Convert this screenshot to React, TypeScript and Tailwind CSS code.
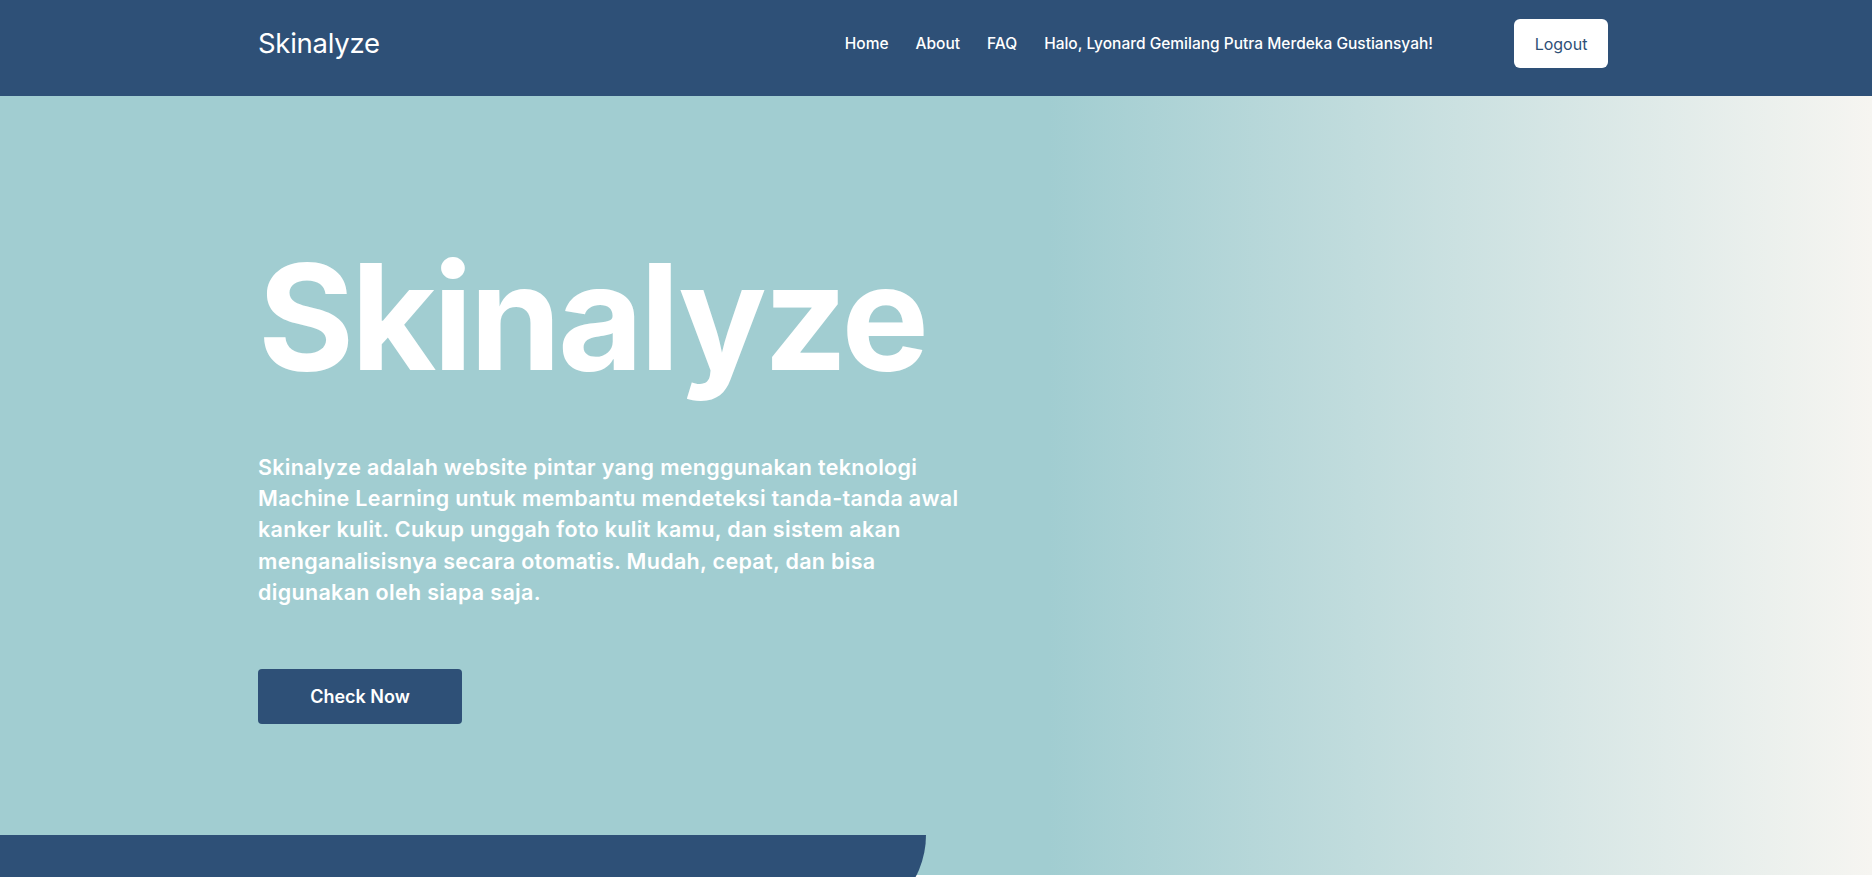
import React from "react";

export default function App() {
  return (
    <div
      className="relative h-[877px] w-full overflow-hidden bg-white"
      style={{ fontFamily: "Inter, 'Liberation Sans', sans-serif" }}
    >
      <header className="flex h-[96px] items-start bg-[#2e5077] pl-[258px] pr-[264px] pt-[19px]">
        <div className="flex h-[49px] w-full items-center">
          <a className="text-[27.5px] font-normal leading-none tracking-[-0.01em] text-white">Skinalyze</a>
          <nav className="ml-auto flex items-center gap-[27px] text-[15.5px] font-medium text-white">
            <a>Home</a>
            <a>About</a>
            <a>FAQ</a>
            <span>Halo, Lyonard Gemilang Putra Merdeka Gustiansyah!</span>
          </nav>
          <button className="ml-[81px] flex h-[49px] w-[94px] items-center justify-center rounded-[6px] bg-white text-[16px] font-normal text-[#2e5077]">
            Logout
          </button>
        </div>
      </header>

      <section className="relative h-[779px] bg-[linear-gradient(90deg,#a1cdd1_0%,#a1cdd1_56%,#f6f5f1_100%)] pl-[258px] pt-[147px]">
        <h1 className="text-[147px] font-bold leading-none tracking-[-0.022em] text-white">Skinalyze</h1>
        <p className="mt-[62px] whitespace-nowrap text-[21.5px] font-semibold leading-[31.2px] tracking-[0.015em] text-white">
          Skinalyze adalah website pintar yang menggunakan teknologi
          <br />
          Machine Learning untuk membantu mendeteksi tanda-tanda awal
          <br />
          kanker kulit. Cukup unggah foto kulit kamu, dan sistem akan
          <br />
          menganalisisnya secara otomatis. Mudah, cepat, dan bisa
          <br />
          digunakan oleh siapa saja.
        </p>
        <button className="mt-[61px] flex h-[55px] w-[204px] items-center justify-center rounded-[4px] bg-[#2e5077] text-[18px] font-semibold text-white">
          Check Now
        </button>
        <div className="absolute left-0 top-[739px] h-[90px] w-[926px] rounded-br-[90px] bg-[#2e5077]" />
      </section>
    </div>
  );
}
